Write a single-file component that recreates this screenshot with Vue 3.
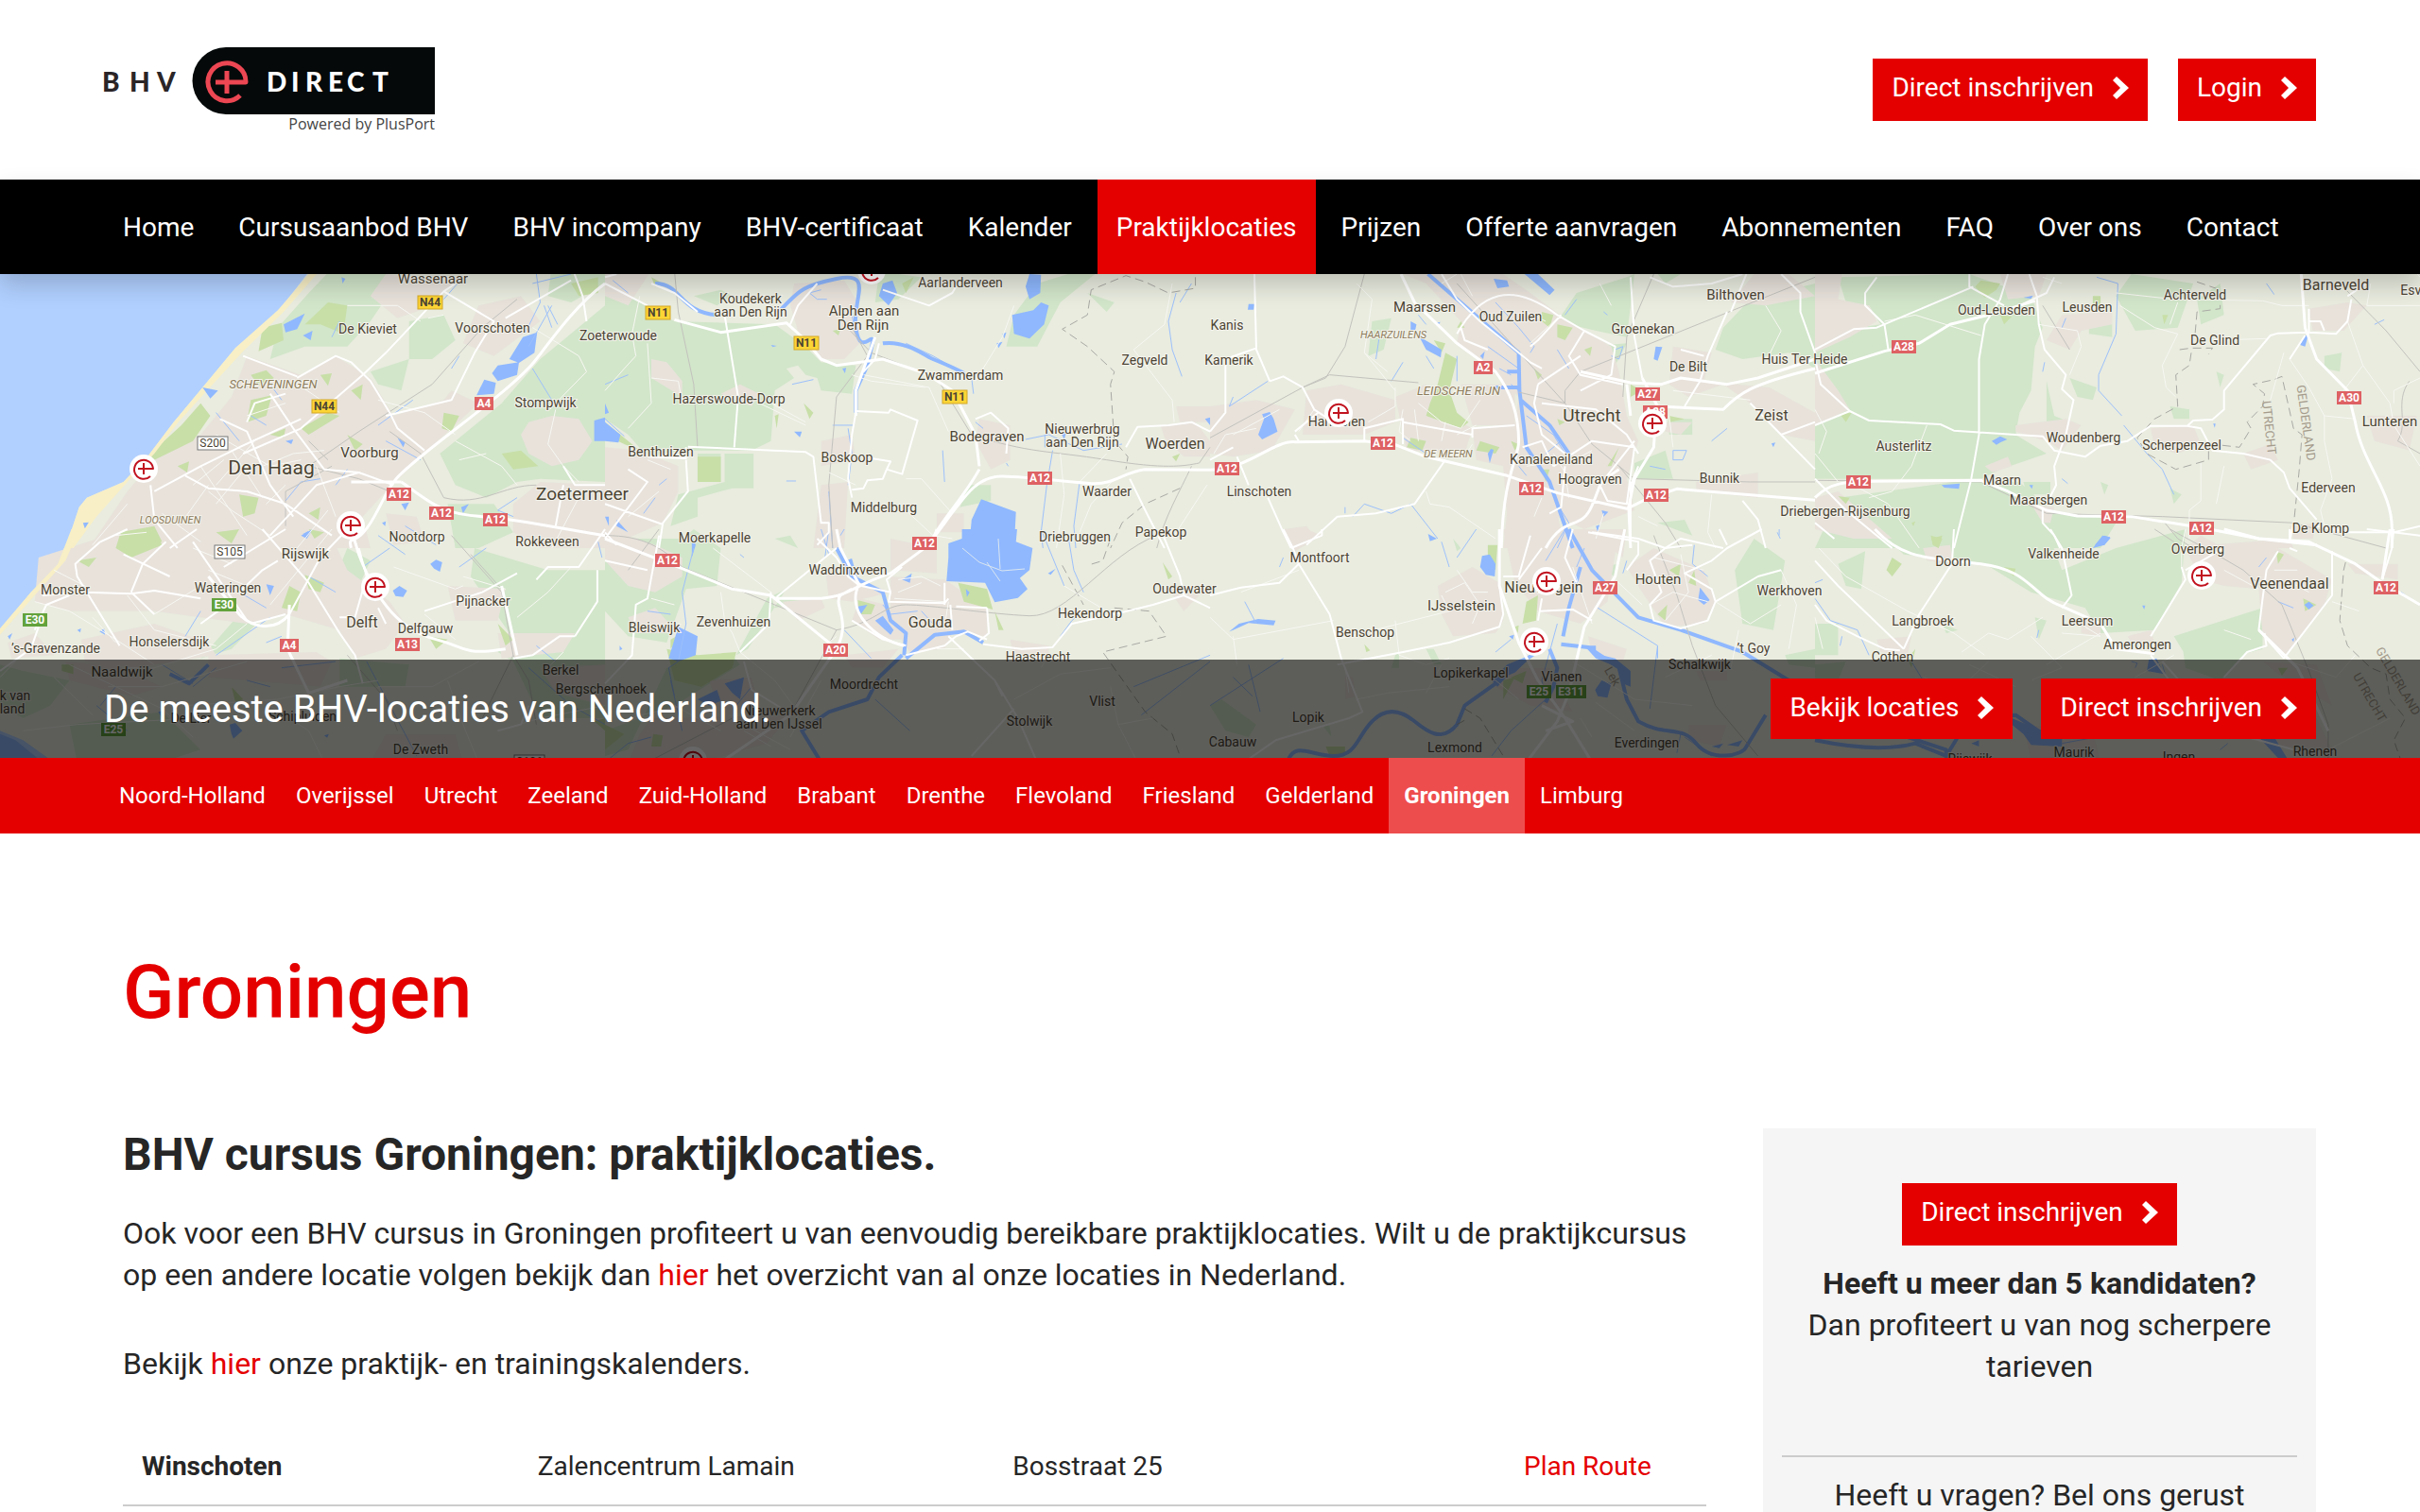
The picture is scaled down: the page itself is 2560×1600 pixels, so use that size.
<script setup>
const navItems = [
  'Home', 'Cursusaanbod BHV', 'BHV incompany', 'BHV-certificaat', 'Kalender', 'Praktijklocaties',
  'Prijzen', 'Offerte aanvragen', 'Abonnementen', 'FAQ', 'Over ons', 'Contact',
]
const activeNav = 'Praktijklocaties'

const provinces = [
  'Noord-Holland', 'Overijssel', 'Utrecht', 'Zeeland', 'Zuid-Holland', 'Brabant',
  'Drenthe', 'Flevoland', 'Friesland', 'Gelderland', 'Groningen', 'Limburg',
]
const activeProvince = 'Groningen'

const locations = [
  { city: 'Winschoten', venue: 'Zalencentrum Lamain', address: 'Bosstraat 25' },
]

const chevron = 'M4 0L0 4L8 12L0 20L4 24L17 12Z'

// Drawing order of the map layers, bottom to top.
const layers = ['sea', 'field', 'urban', 'park', 'sand', 'water', 'stream', 'river', 'rail', 'border', 'minor', 'road', 'major']

// The map is stored as eight sheets, each with its own origin.
const sheets = [
  {
    x: 0, y: -10,
    sea: 'M0 0H815L720 150 610 265 525 390 450 500 385 605 320 690 225 740 205 770 170 900H0Z',
    sand: 'M815 10L720 145 610 265 525 390 450 500 385 605 320 690 225 740 205 770 170 900H190L250 800 330 690 400 600 462 500 540 395 630 275 735 150 835 10Z',
    field: 'M870 0H1000L1010 90 960 180 900 260 790 260 700 300 720 200 800 90ZM1568 130L1400 300 1300 440 1180 560 1140 600 1180 700 1260 740 1340 690 1400 680 1568 690ZM1060 180L1150 160 1180 240 1120 300 1060 300ZM960 340L1060 300 1040 400 980 380ZM1160 760L1280 760 1330 850 1240 900H1180ZM1430 0H1568V60L1480 120 1420 100Z',
    urban: 'M640 290L780 350 870 290 960 360 1020 480 1150 430 1170 400 1240 440 1100 600 1000 720 940 800 960 900H230L330 720 400 620 520 540 600 420ZM1000 30L1180 60 1100 140 1030 170 960 100ZM1240 130L1350 100 1400 180 1280 290 1200 250ZM1350 540L1370 500 1430 480 1500 490 1535 560 1500 620 1430 640 1370 600ZM1330 760L1400 690 1568 700V900H1400L1330 850ZM1000 790L1080 800 1100 880 1020 890Z',
    park: 'M680 200L730 185 735 240 670 275ZM850 120L900 130 890 220 830 190 790 190ZM470 510L520 440 545 480 500 560 400 620 385 605ZM650 430L705 415 690 480 640 500ZM780 520L850 470 880 480 800 540ZM620 730L670 740 660 790 630 800ZM310 850L400 830 420 880 330 900ZM1480 60L1550 40V90L1500 100ZM650 350L690 335 710 360 670 385ZM1150 470L1190 480 1170 530 1145 520ZM1300 600L1350 590 1395 640 1330 650ZM910 400L940 380 935 430ZM830 350L860 345 850 385ZM700 540L740 520 735 550ZM900 540L940 570 920 590ZM800 790L830 770 825 810ZM460 640L490 625 485 660Z',
    water: 'M735 190L790 155 770 205 740 215ZM785 225L810 210 805 240ZM1355 230L1392 215 1385 280 1345 312 1320 300ZM1290 320L1345 310 1340 350 1290 370 1275 345ZM1255 365L1285 375 1280 410 1235 415ZM1540 495L1568 485V560L1540 560ZM1030 550L1050 565 1045 580ZM740 560L760 555 755 570ZM780 860L810 840 795 870ZM1040 760L1060 755 1050 780ZM1195 770L1215 760 1200 790ZM525 390L565 400 545 425ZM215 820L230 818 220 838ZM885 40L895 45 888 60ZM990 820L1000 815 998 830Z',
    stream: 'M560 470L620 560M1430 130L1370 260M1390 30L1400 120 1360 220M1380 330L1440 450M700 380L730 430M740 750L780 690 830 680M870 700L900 650M1050 830L1130 890M1480 30L1380 60M1070 430L980 510M1200 40L1150 110M1190 290L1170 330M1340 740L1290 780 1330 800M650 480L690 510M880 180L860 230M1410 130L1430 200M1420 130L1445 190M1000 560L1090 620',
    rail: 'M1340 110L1250 200 1120 380 930 530 800 640M800 640L930 680 1010 720M1010 530L1090 600 1150 740C1250 770 1300 700 1390 700M800 560L850 620M860 640L740 720V830',
    minor: 'M560 540L700 640 780 620M600 590L680 740M520 640L640 860M820 640L870 800M760 370L880 470M1110 170L1150 160M1380 200L1500 290 1520 340 1440 440 1425 460M420 790L520 880M700 860L600 780 540 720M900 130L1030 130 1090 180M980 430L1100 470 1180 540M240 890L330 760M1180 560L1300 640 1340 700M1260 600L1190 620M560 700L660 560M740 440L640 480M680 640L760 600 840 590M1440 460L1420 570 1460 640 1500 690M300 860L380 850M580 620L500 700M640 640L560 760M740 700L690 760M470 820L540 700M850 780L770 900M1500 740L1430 900',
    road: 'M1180 60L1150 85 1280 180 1230 280 1170 430 1000 480M1150 85L1000 280 940 350 780 520 630 600M770 360L870 290 910 310 960 370 1010 470 1030 520 1100 590M400 720L520 640 620 580 780 490M390 700L400 810 460 900M480 670L540 710 640 720 740 760 860 860M700 410L760 520 840 650 930 660 1020 700M630 290L770 355M570 490L640 530 700 700 760 800M930 660L820 700 700 860M640 500L660 440 740 410M1310 170L1480 50M1460 640L1490 700 1568 700M1440 830L1460 700M260 880L330 840M1480 0L1510 100 1520 180',
    major: 'M1568 60C1500 120 1440 220 1390 300S1200 500 1100 600 1020 690 970 800 900 850 910 900M1040 690C1120 760 1140 790 1250 800S1500 850 1568 860M910 690L1040 690',
  },
  {
    x: 640, y: -10,
    field: 'M0 60L180 180 440 190 520 260 560 310 650 320 640 410 560 400 550 360 520 350 500 320 470 330 490 360 440 400 430 560 380 590 200 590 110 610 60 540 0 490ZM240 600H300V690H240ZM310 600H385V710H330L240 740 240 800 170 830 190 730 310 690ZM1120 60L1200 30H1270L1180 120 1120 260 1040 260 1060 160ZM710 30H760L820 40 760 110 700 120ZM940 700L1000 700 1000 750 920 770ZM230 100L300 80 330 100 290 130ZM1250 90L1320 120 1300 150Z',
    urban: 'M490 60L620 50 650 110 660 250 620 300 560 300 500 210 480 130ZM120 300L160 310 200 370 200 420 120 360ZM970 490L1050 510 1050 620 1000 650 960 560ZM1440 510L1530 500 1568 560V610L1500 610 1450 550ZM0 580L90 590 190 640 190 720 150 820 0 900ZM560 560L640 540 650 620 560 640ZM560 700L630 690 620 900H540ZM860 790L930 790 930 850 860 850ZM300 410L350 380 400 410 380 450ZM1480 450L1568 450V500H1490ZM0 0H130L60 130 0 100Z',
    park: 'M590 210L610 205 605 225ZM440 480L450 475 445 520ZM0 500L40 540 90 590 50 570 0 540ZM1470 610L1490 600 1480 625ZM515 440L540 470 530 490ZM770 60L800 40 780 90ZM120 40L150 60 130 70ZM240 610H300V690H240Z',
    water: 'M720 60L745 50 757 90 735 130 710 100ZM1100 30L1130 32 1128 90 1100 110 1090 70ZM1055 160L1110 145 1130 120 1150 130 1138 190 1100 235 1060 220ZM1015 250L1030 245 1020 265ZM0 500L40 540 35 565 0 560ZM975 745L1065 785 1060 900H890L945 880 950 810ZM490 530L510 530 505 548ZM0 440L10 470 0 475ZM615 330L625 328 622 345ZM1180 530L1195 535 1190 555ZM30 810L60 850 30 830ZM1555 490L1568 485V510ZM0 800L10 800V830ZM1030 220L1040 215 1035 235ZM430 255L445 258 435 262Z',
    stream: 'M780 250L850 290 950 360 955 410M590 510H645M875 590L880 690M1160 590L1145 700 1130 850 1135 900M1230 690L1215 830 1220 900M1480 90L1460 180 1470 270 1495 355M1090 555L1150 540 1240 590 1340 570M1520 60L1490 120M0 380L60 350M630 520L640 600 630 700M580 720L590 900M485 380L540 365M470 687H495M140 700L160 680M1140 540V580M560 80L530 90 550 110 575 110M960 500L980 520M0 490L50 545M640 160L650 220M100 790L130 740M60 90L20 50M1040 630L1045 640',
    river: 'M130 60C200 60 190 150 290 160M450 150C500 90 500 70 600 45S640 110 650 200 690 220 695 240L680 320 650 400 650 470M720 250C780 240 830 290 850 300S910 330 930 345',
    rail: 'M180 20L190 150 230 380 240 580M620 190L690 280 860 360 950 540C1100 600 1150 590 1300 620S1500 640 1540 630L1568 580M640 200L680 290 600 420 580 700 590 900M1520 640C1490 720 1450 800 1430 900',
    border: 'M1530 40V75L1460 90 1400 55 1350 35 1260 80 1250 160 1185 205 1250 260 1320 340 1310 380 1320 560 1355 610 1350 650M1490 710L1400 760 1340 820 1310 900',
    minor: 'M110 250L120 440 60 520M120 360L190 370 200 440M400 440L520 510M1060 130L1030 230 960 370M670 350L840 390 890 530M1470 60L1450 190 1370 270 1470 430 1475 500M780 680L820 680 900 790M650 700L580 660M1560 700L1470 870M1180 600L1190 730 1170 900M1320 680L1260 760 1230 850M780 780L850 860 900 870M90 100L70 220 80 290 50 330 0 400M350 420L430 440 520 500M640 350L690 370 830 390M1300 600L1230 690M170 650L110 620M60 800L140 720',
    road: 'M0 60L110 130M310 160L345 420 335 580M650 465L735 470 740 460 810 495 770 665 730 650 720 680 680 685 670 710 640 715M215 578L520 595 540 610 560 820 580 820 580 850 550 890M650 470L640 540 630 680 640 740M0 40L30 30M210 620L215 720 150 820 140 900M0 870L110 690 60 650M480 190L500 130 550 60M720 80L840 130 900 90 920 50M690 615L740 625 730 650M1350 580L1380 515 1460 510 1520 500 1568 530M960 490L1000 470 1045 520 1040 600M1360 680L1400 780 1450 900M110 610L210 615 210 580M0 760L150 825M120 60L180 90 240 150M0 850L30 890M670 340L700 300 710 250',
    major: 'M180 175L300 215 470 185 520 240 560 300 600 320 720 300 830 345 900 400 960 540 970 640M970 650C930 740 860 830 850 870M850 870C930 740 960 670 1030 672S1200 690 1260 695 1350 655 1400 650L1568 652M700 230L650 400 650 480',
  },
  {
    x: 1280, y: -10,
    field: 'M1330 200L1400 110 1568 60V330L1500 280 1380 300 1310 270ZM900 180L950 90 1080 40 1100 30 1080 230 1000 210ZM1160 30H1220L1180 60ZM420 180L470 170 450 270 410 290ZM1100 630L1180 590 1200 680 1100 680ZM760 210L800 200 810 260ZM1160 820L1230 810 1250 860ZM1190 490H1250V540H1190ZM980 260L1080 250 1050 320 960 300Z',
    urban: 'M500 30H760L830 90 940 190 1040 260 1060 340 1080 480 1110 560 1080 680 1100 780 970 840 900 800H770L760 640 690 620 680 520 790 510 800 420 740 350 640 250 650 180 560 60ZM1200 260L1300 280 1280 370 1450 390 1568 470V560L1480 540 1400 440 1330 380 1240 420 1190 380ZM250 400L340 380 480 430 480 500 400 540 240 540ZM0 450L120 430 220 460 160 590 60 610 0 600ZM480 420L560 380 600 470 680 520 660 600 510 590ZM1260 690L1420 660 1420 740 1260 720ZM770 780L900 790 920 900H760ZM1350 120L1410 30 1500 30 1568 100 1440 130ZM650 380L790 380V510H680ZM190 840L250 830 270 860 220 890ZM1180 500L1250 500 1220 540 1180 530Z',
    park: 'M610 280L640 300 620 400 640 470 670 500 650 520 560 480 570 440 590 380ZM860 150L890 160 880 200 860 180ZM900 190L940 200 920 240 900 230ZM970 270L990 260 985 290ZM840 330L860 350 850 365ZM1090 380L1120 400 1090 420ZM700 560L750 580 740 600 690 590ZM580 240L610 250 600 280ZM1060 580L1040 640 1030 640ZM900 490L920 500 905 510ZM780 560L800 570 790 590ZM640 200L650 180 660 200ZM520 550L560 560 550 590 510 580ZM860 650L880 650 870 690ZM1190 480L1230 490 1190 500Z',
    water: 'M735 45L770 50 775 70 745 75ZM815 30H850L893 80 880 97ZM520 180L535 190 530 220 600 270 598 295 560 270 545 235 520 210ZM1155 260L1172 262 1160 305 1150 300ZM125 540L140 490 135 475 155 468 165 490 175 530 135 555ZM720 600L728 585 735 588 725 630ZM700 290L712 275 708 300ZM1000 830L1012 825 1005 850ZM1015 780L1032 785 1020 800ZM100 125L115 125 113 143 98 143ZM585 185L597 182 590 195ZM1455 568L1465 565 1460 580Z',
    stream: 'M60 420L50 450 150 370M500 310L470 370M560 290L580 330M640 290L640 370M740 120L800 200 840 260 830 280M720 260L800 330M780 350L750 330M900 270L930 330M800 640L820 670M1200 590L1235 590 1225 620 1200 620ZM440 220L430 300M910 560L870 600M1050 270L1070 260 1060 300 1040 290M500 550L560 600M370 800L400 760 470 790 520 760 590 870M1180 650L1140 640M350 790V770M900 760L930 820 900 900M1300 560L1340 520M950 110L920 160M780 380L800 400M540 160L560 190M1020 150L1030 160M1470 850L1478 870M1170 730L1190 740M820 480L890 540 920 600',
    river: 'M565 30L800 280 802 400 820 580 880 690 940 900M805 430L880 510 930 600M740 390H800M770 340H800',
    rail: 'M400 30L350 260 300 360 240 390 0 550M240 390L310 350 540 375M640 60L920 440 990 570 1100 680 1400 690H1568M920 440V400L960 340 1568 40M1150 30L1080 230 1070 420M1060 640L1180 820 1220 900M800 405L920 440',
    minor: 'M380 60L420 110 400 280 480 400M400 280L460 340M230 530L270 460M480 390V450L410 500M640 30L600 60M1440 130L1480 210 1440 310M820 150L870 180M1300 730L1290 850 1310 900M680 570L660 610M560 720L570 760 620 770 740 870M1400 430L1200 400M900 170L830 250M1190 480L1200 580M500 460L490 530 520 560M540 440L600 500 650 520M650 30L680 100M540 560L530 460M600 560L610 500M640 540L690 510M820 640L880 630M930 630L990 590M860 740L840 800M930 740L920 660 890 600M1020 790L1000 870M1160 830L1110 800M10 600L40 540 120 520M60 540L180 460M700 430L650 520M1040 130L1010 60',
    road: 'M115 30L120 270 155 370M120 265L40 300V470L0 530M155 370L190 355 240 390 270 460 320 500M640 220C700 90 780 50 900 160L970 210 1050 260 1040 350 960 400M910 160L850 240 830 260M970 210L930 290 960 350 1070 380M850 380L960 290M850 380L840 440 860 540 920 600M860 440L1000 460 1080 540 1110 600M1110 640L1090 700 1090 900M250 890L330 800 430 790 530 760 610 620M70 610L100 700M150 740L190 850 210 900M220 530L280 470M230 560L220 540M400 560V520L500 490 500 570M680 550L680 520 790 510M1100 230L1090 40M1100 230L1120 360M1340 150L1290 290 1270 370 1230 450M1390 30L1350 150M1140 40L1200 70 1300 60 1380 30M1480 30L1530 90V150L1568 280M1220 270L1280 290M700 180L830 310 860 330M600 30L640 110 700 180M1400 440L1480 540 1568 500M1480 540L1568 650M810 580L860 560 890 640M1100 560L1010 700 1030 750 1080 760 1100 580 990 560 890 640M880 790L910 770 920 640M990 850L1110 870 1180 900 1220 870 1330 900M1380 750L1420 810 1440 900M650 200L660 240 720 270M0 620L60 580M500 500L680 540',
    major: 'M0 652C100 650 160 560 220 563L400 560 480 572 560 610 770 670 900 725 1080 775 1130 745 1210 712 1568 748M495 30L530 120 640 250 740 340C790 420 800 500 800 560S760 660 755 900M870 900C920 790 960 850 990 765S1000 700 1060 650M1090 900L1085 770 1100 680 1150 580 1155 480M960 340L1090 375 1170 380 1220 360 1340 380 1420 360 1568 300M1080 380L1090 480M1120 360L1160 450 1330 460C1370 410 1400 380 1568 330',
  },
  {
    x: 1920, y: -10,
    field: 'M60 40L400 30 560 100 590 200 570 260 560 400 530 470 520 540 600 600 480 650 430 680H0V270L110 200 170 190 140 130 80 120ZM360 690H530L620 790 790 800 740 900H0L60 740ZM780 100L820 30 980 60 940 200 830 210ZM1320 290L1365 280 1360 340 1320 330ZM600 370L620 480 660 500 600 500ZM660 360L730 390 720 430 680 420ZM710 180L770 190 770 230 710 220ZM540 690H610V730H550ZM920 450L970 460 970 490 930 490ZM1050 60L1060 160 1000 190 990 110ZM1040 340L1060 350 1050 390ZM920 710L950 730 930 760ZM740 690L760 700 750 730Z',
    urban: 'M0 30H70L60 110 140 130 160 180 90 230 0 280ZM480 30L600 30 580 100 500 110ZM640 160L770 150 770 190 690 210 660 270 600 240ZM1280 140L1380 120 1430 130 1370 210 1290 210ZM520 510L650 490 690 510 640 590 600 560 520 530ZM870 520L980 510 1000 570 940 600 880 580ZM0 300L60 400 90 460 0 510ZM0 740L60 720 200 870 100 870 0 840ZM1430 480L1560 480 1540 590 1450 560ZM1110 600L1180 570 1200 620 1130 650ZM440 640L500 610 510 640 460 660ZM1230 830L1300 820 1290 870 1240 870ZM1020 890L1230 870 1240 900H1020ZM560 760L620 770 610 820 590 820Z',
    park: 'M430 50L480 60 470 80 440 105 415 70ZM480 160L510 165 490 190ZM60 735L90 740 80 760ZM65 475L95 470 80 500ZM300 870L330 860 320 900ZM250 820L260 815 255 830ZM720 100H740V130H720ZM900 160L915 160 905 190Z',
    water: 'M1270 225L1278 225 1270 260 1257 255ZM458 560L480 545 498 555 480 565 470 572ZM328 700L375 695 373 712 335 708ZM725 890L740 870 750 860 766 868 750 890ZM1032 505L1038 505 1036 518ZM555 700L565 700 562 712ZM540 105L565 98 560 108Z',
    stream: 'M730 40L785 60 780 220 735 350 735 400 795 480M800 510L860 600 900 650 930 730M640 200L650 170M640 680L655 695M1450 190L1475 175M1170 60L1190 95M595 310L590 340',
    rail: 'M0 685L430 690 600 790 900 800 1240 820 1480 900M590 130L660 270M900 810L940 870 980 900M1360 60L1480 210 1568 340M1540 370C1500 440 1540 500 1510 560L1568 600',
    border: 'M990 55L1050 80 1050 140 990 150 985 220M945 270L975 265 1030 265 1020 285M975 280L970 320 935 350 940 450 880 490 835 550 860 600 935 650 1020 620 1020 580 1050 573 1100 580 1130 520 1120 500 1160 450 1165 410 1135 380 1190 365 1210 355 1240 520 1262 540 1255 650 1240 830',
    minor: 'M180 180L260 160 430 225M580 190L680 210 690 260 660 350M780 90L930 110 1160 115 1210 130 1280 130M790 130L880 200 940 220 900 320 910 390 935 420M1040 240L1170 235M1230 300L1280 390 1320 480 1320 560 1340 680 1310 780 1320 830M1380 180L1420 320 1370 400M1420 320L1490 440 1500 510 1568 640M940 120L920 190M290 510L250 640 200 720 140 740M0 600L60 690M1440 60L1430 130 1568 130M970 870L970 780 1000 750 1000 630M1060 640L1040 760M1500 440V400L1568 360M0 460L30 530 10 600M1540 0L1568 40M1320 480L1400 490M1215 280L1180 430M590 40L640 60M100 700L190 760 270 900',
    road: 'M160 40L130 90V130L180 190 190 270M0 270L100 205 160 200 410 70M400 30L400 70 490 130M500 30L480 110 440 190 425 300V540L405 680 360 900M555 30L575 100 580 190 595 270 650 350 640 395 670 430 650 540 620 640 625 700 600 760M90 465L0 510M520 540L590 545 620 590 700 610 740 575 810 560 870 512 965 512 1000 520 1030 590 1110 600 1180 620 1215 660 1230 710 1300 810M965 512L980 495 1030 492 1060 460 1060 400 1180 225 1200 218 1280 215 1350 220 1380 180 1390 110M1280 180L1310 180 1320 210M1280 140V220M1230 300L1270 225M620 40L600 90 530 130M590 770V820L620 860 635 900M1240 820L1230 880M0 820L50 870M0 300L15 380 90 465 140 495 325 507 360 527 520 540M1430 60L1380 100M1500 850L1380 850 1300 830M1500 850L1568 830M0 680L80 780 200 900',
    major: 'M0 345L180 275 270 250 350 190 450 160 570 115M1260 30L1270 200 1300 300 1380 400 1400 500C1420 640 1500 720 1495 850V900M0 740C40 690 80 690 150 688L430 685 500 720 600 780 680 798 820 800 1000 835 1150 870 1300 890',
  },
  {
    x: 0, y: 270,
    sea: 'M0 0H185L150 110 80 200 0 320ZM0 640L60 670 140 740H0Z',
    sand: 'M185 0L150 110 80 200 0 315V335L90 210 170 100 205 0Z',
    field: 'M1230 60L1420 130 1568 130V600H1400L1330 420 1290 390 1320 330 1220 150ZM0 430L60 450 180 480 130 560 60 600 0 560ZM620 270L690 270 600 380 520 410ZM880 410L1060 430 1050 500 880 500ZM900 60L960 100 930 180 880 120ZM180 620L420 580 520 700 420 740H200Z',
    urban: 'M100 90L330 0H850L900 130 1010 230 1050 300 1000 380 920 410 880 320 740 270 640 300 400 260 180 260 90 230ZM210 350L400 300 540 360 560 400 350 440 220 420ZM20 360L90 330 140 400 30 410ZM1160 180L1310 190 1290 290 1180 290ZM170 420L300 430 420 500 340 530 180 480ZM1290 330L1490 330 1460 390 1300 410ZM1400 440L1568 430V560L1440 520ZM540 400L820 390 860 420 830 500 540 470ZM1000 650L1180 650 1200 740H960Z',
    park: 'M310 20L400 0 420 50 340 90 300 60ZM560 10L620 0 600 45ZM790 145L840 170 830 200 800 190ZM750 180L780 200 770 260 730 250ZM800 0L840 10 815 30ZM160 430H190V460L160 450ZM200 100L250 90 230 120ZM1290 300L1330 350 1310 370ZM1110 340L1160 350 1130 380ZM1540 610L1568 600V640ZM600 500L630 540 610 550Z',
    water: 'M1115 110L1130 97 1146 105 1140 135 1125 125ZM1018 195L1035 180 1055 195 1045 215 1025 212ZM595 620L610 615 628 640 605 665 600 650ZM200 320L210 315 208 328ZM258 325L270 315 272 335ZM785 15L800 5 795 25ZM690 175L710 180 700 210ZM20 340L32 330 25 350ZM840 655L852 650 848 662ZM410 580L425 575 420 600ZM0 650L40 670 110 740H0ZM960 150L975 140 965 160Z',
    stream: 'M700 280L560 400M620 200L690 250M800 150L870 200M1190 120L1260 60M500 500L560 440M640 480L700 500M980 20L1050 80M250 560L330 640M730 440L870 420M300 500L260 560M1370 440L1480 560 1568 620M420 430L500 490M520 260L480 340M690 360L730 340M1550 40L1560 90M940 120L1010 60M1390 370L1440 420M950 420L1080 720',
    river: 'M440 460L490 490 540 430',
    rail: 'M1170 20L1300 200 1330 400 1370 480 1390 620M1330 400L1250 600M900 400L1000 540 1030 640M1220 80L1300 190',
    minor: 'M180 430L300 500 420 570 500 660M90 230L180 260 300 350 400 430M640 300L560 380 400 440 330 440M480 560L720 540 880 500 980 480M140 470L240 590M1160 480L1200 620 1240 740M1290 640L1400 600 1568 560M60 640L200 620 360 610 520 600M700 560L800 640 840 740M1100 270L1180 350M1200 150L1310 190M1020 120L1180 190 1200 180M540 130L640 180M520 180L400 270M40 420L0 470M330 210L400 320 560 370M500 60L600 110M1460 390L1420 440M240 280L300 360M140 130L220 180M280 500L420 500 640 420M980 500L1120 500 1240 420M860 0L700 240M1480 120L1420 200 1340 280',
    road: 'M260 40L195 110 200 150 240 230 310 370M110 210L220 200 340 205 400 195 520 220M90 320L120 240 180 210M440 60L510 0M430 40L370 110 340 200M680 0L800 170 880 330 920 400 940 490M750 270L830 90 900 0M740 0L580 120M340 200L400 270M650 300L740 270M520 300L610 220M100 310L80 380 0 450M1568 0L1500 120H1420L1390 160M1100 260L1250 200 1340 140M1490 340L1450 340 1380 400 1330 410M1548 130V230L1490 340M880 280H920L950 150 930 60M1000 300L980 250M500 40L640 290M320 80L440 150M720 100L680 130 620 200M1290 640L1350 620 1370 560',
    major: 'M910 0L930 80C980 240 1040 320 1130 350S1200 400 1310 380M750 240L745 380 800 520 900 480M750 270C710 330 650 310 620 270L540 150M1300 180L1340 400',
  },
  {
    x: 640, y: 270,
    field: 'M0 30H200L230 0 300 60 290 180 210 190 160 360 60 340 0 260ZM370 380L470 190 420 220 340 400ZM430 210L520 230 440 250ZM160 440L330 400 350 430 180 560 0 640V720L60 700ZM440 30L480 20 500 60Z',
    urban: 'M0 0L130 50 200 90 200 150 130 200 60 180 0 100ZM460 230L560 220 570 250 500 290ZM740 150L880 160 990 250 990 340 900 330 880 380 790 390 740 300ZM570 120L660 160 740 200 640 230 580 220ZM660 220L730 240 770 350 710 350 640 290ZM60 280L130 250 190 330 80 330ZM120 600L480 590 420 680 250 740H60L90 650ZM620 400L760 380 720 440 640 440ZM1050 350L1150 370 1150 420 1060 420ZM740 30L860 60 860 140 740 130ZM1460 190L1540 210 1500 260ZM270 480L380 470 400 560 300 600Z',
    park: 'M915 170L990 190 1005 255 930 230ZM1010 260L1033 320 1020 320ZM160 380L240 400 340 390 330 440 250 500 180 480ZM1445 105L1470 150 1460 160ZM655 225L700 240 690 270 660 270ZM0 620L50 650 0 700ZM125 650L150 655 145 690 120 690ZM170 380L200 330 170 350Z',
    water: 'M925 0H1068L1065 40 1108 60 1100 130 1075 155 1095 190 1070 218 1010 232 985 170 885 165 890 90 890 45 925 30ZM190 310L240 340 235 400 190 420 165 410ZM240 540L290 510 300 545 270 560ZM655 245L680 240 660 275ZM700 290L720 275 748 320 740 335ZM770 160L795 140 790 170ZM1148 140L1168 125 1155 145ZM935 190L945 200 938 215ZM225 20L235 50 225 90ZM310 490L360 470 350 540 330 520ZM38 370L45 380 38 385Z',
    stream: 'M230 60L200 200 210 300 190 420 165 440 180 530M620 320L690 410M560 0L580 80M1130 0L1190 180M1200 20L1215 130 1240 200M700 540L790 640M1370 500L1568 400M1390 590L1568 420M170 480L200 640M110 260L170 270M580 0L570 90M360 90L350 80M720 240L740 270 810 260M820 260L850 300M610 20L620 0M0 740L60 680 120 660M340 560L380 500M1180 340L1210 290 1220 280',
    river: 'M600 60L640 150 720 200 740 290 780 330 775 400M780 410L855 335 930 325 980 360M770 400L710 470 680 540 580 580 510 640 560 740M635 95L650 160',
    rail: 'M0 20C100 20 150 60 200 120L440 240 600 320C700 300 720 240 780 240S1000 270 1100 275 1300 80 1430 20M600 320L480 590M110 740L330 600M60 130L140 0',
    border: 'M1310 30L1290 100 1250 115M1185 115L1240 240M1320 250L1410 260 1455 340 1290 390 1400 580 1470 650 1490 720',
    minor: 'M280 60L430 200M120 220L180 240M350 390L330 330 310 290 300 200M350 390L440 480 500 580M1060 540L1180 460 1310 440M330 600L480 700M1310 500L1330 620 1380 740M1130 440L1140 420M560 480L480 660M860 380L930 380M1190 180L1300 260M600 340L580 360M180 560L300 640M820 170L760 200M750 220L880 230M1330 620L1420 600M360 640L430 690M890 230L880 310M60 600L200 560M760 160L820 150 870 180',
    road: 'M140 20L110 220 80 240 70 400 0 490M445 215L600 60M350 390L425 300 430 200M665 180L740 200 735 230 880 235 890 220M990 250L910 245M740 200L730 160 770 120M890 340L1010 480 1070 600 1120 740M780 400L880 370 910 340 940 325 990 350M990 250L995 330 970 355M980 365L1080 380 1160 375 1210 300 1320 270 1420 240 1500 210M1440 0L1490 150 1500 210 1568 250M640 290L720 350 780 370M1060 570L950 720M0 100L110 130M550 30L600 90 630 150 660 180M880 240L880 170M1010 480L1030 530M360 420L380 510 460 570M900 320L895 240',
    major: 'M0 30L200 125 330 190 430 210 600 380M440 220H560C640 210 640 180 740 140L850 40 860 0M600 380C640 290 590 240 610 210L640 190M660 170C620 260 700 350 775 370M600 380L480 590 300 740M600 0L610 60 660 180',
  },
  {
    x: 1280, y: 270,
    field: 'M1410 30L1490 100 1460 320 1380 300 1360 130ZM0 560L30 540 120 620 100 660 40 640ZM480 400L490 390 490 440 470 440ZM560 380L580 380 600 430 580 430ZM1490 400L1568 380V440L1500 430ZM290 620L310 625 315 660ZM1000 120L1060 110 1050 150ZM630 30L650 60 640 70Z',
    urban: 'M590 180L680 120 750 170 760 290 740 330 630 340 600 270ZM760 0H1060L1030 230 960 300 850 260 790 170ZM1080 120L1150 60 1280 130 1310 230 1280 300 1180 310 1120 200ZM970 0H1080L1070 90ZM190 20L250 0 290 20 220 70ZM780 440L880 440 940 580 830 560 740 500ZM980 340L1080 380 1070 420 990 400ZM350 460L370 470 380 530 350 540ZM1260 450H1340V480H1270ZM1240 620L1340 620 1320 690 1240 670Z',
    park: 'M720 50L745 50 740 130 720 120ZM820 230L850 210 845 290 810 300ZM780 470L820 450 810 490ZM1160 270L1185 240 1180 290ZM400 365L415 385 405 390ZM1240 170L1255 130 1260 180ZM300 690H350L350 720H310ZM760 480L790 470 760 540ZM1190 130L1220 110 1215 150ZM790 310L800 305 798 330Z',
    water: 'M705 85L725 80 740 110 738 150 715 145 700 120ZM1270 185L1295 225 1280 240 1265 225ZM998 510L1015 480 1040 490 1030 535 1005 530ZM770 430L830 400 820 420 790 455 770 465 760 480 745 500 730 480ZM50 325L75 300 125 285 170 290 165 305 100 298 60 320ZM565 15L588 30 570 38ZM1300 690L1330 680 1320 695ZM1340 685L1380 670 1370 690ZM970 370L1000 370 1000 395 1050 410 1090 450 1090 500 1070 490 1060 440 1000 410ZM775 340L788 335 785 350Z',
    stream: 'M90 230L120 300M1005 250L1160 370V410M0 560L190 410M100 430L130 580M60 470L110 530M780 350L740 390M1160 370L1140 570M900 300L860 480 870 540 780 640 730 720M690 0L640 90M600 40L620 120M970 60L950 120M1255 50L1250 110 1290 150M190 90L180 120M1230 660L1300 720M1475 0V20M1080 100L1070 140M870 100L920 0M1220 650L1210 710',
    river: 'M930 0L990 130 1110 280 1220 320 1380 390 1500 480M960 120L930 250 915 340M910 365L980 375 1060 440 1080 540 1110 610C1180 660 1220 620 1260 680S1380 720 1390 690L1440 590M840 395L790 440 740 490 660 560 640 620C600 680 560 640 530 610S460 560 420 610 380 720 320 720 220 670 200 740M880 380L900 440 890 500 870 550',
    rail: 'M1150 20L1210 210 1250 370 1310 560 1420 720',
    border: 'M660 570L700 600 760 720M640 620L670 600',
    minor: 'M0 280L60 350 320 290M330 350L620 260 600 210M480 290L490 400 560 430 620 410M380 540L460 520 620 500M1310 230L1400 300 1480 240M1370 320L1350 440M940 420L1100 540 1250 560M60 340L70 430M1050 160L1120 240M230 130L80 200M600 430L560 520M350 440L360 520M1180 470L1300 400M640 130L680 200 720 200M610 200L660 170 700 240 680 300M1150 90L1280 130M1140 240L1200 200 1290 230M1220 80L1240 200 1180 290M940 120L990 300M960 600L990 660M1480 130L1520 240 1500 380M730 470L800 540M1000 550L1100 640',
    road: 'M190 0L215 60 230 110 310 270 340 410 395 580 360 600 170 670 100 730M230 110L180 170 80 185 0 210M330 430L500 390 620 360 750 310 760 270 750 180M855 260L940 255 990 290M980 10L1110 40 1110 80 1080 130M1250 50L1180 60 1140 100 1170 200 1140 240 1150 290 1220 315 1290 290 1310 230 1300 190 1230 140 1300 100 1340 60 1430 0M210 60L290 20V0M760 150L800 150 830 20M860 220L850 290M950 170L920 90 940 0M1480 130L1420 150 1310 230M1340 50L1320 0M800 160L860 60',
    major: 'M750 0L750 180 800 360 850 480 920 600 990 740M1075 0L1050 150 970 310 930 520 900 610 820 740M860 560L940 610 870 640',
  },
  {
    x: 1920, y: 270,
    field: 'M160 0L600 0 640 130 780 60 960 0 950 170 880 320 740 330 700 250 560 200 440 110 230 80ZM930 340L1160 250 1160 380 1100 400 960 400ZM0 300L60 300 60 400 0 400ZM60 110L130 70 120 190 80 180ZM570 280L600 290 580 350ZM330 300L370 320 340 330ZM0 430L80 420 60 480 0 480ZM950 350L1120 390 1050 480 960 440Z',
    urban: 'M960 60L1000 20 1060 60 1200 60 1340 160 1320 240 1220 400 1160 340 1150 190 1060 180 1000 160ZM1380 110L1510 110 1510 160 1400 140ZM690 280L740 300 740 340 690 330ZM810 340L870 320 880 360 820 360ZM160 350L250 340 240 400 170 390ZM1160 420L1300 430 1340 560 1200 460ZM280 60L350 50 360 110 290 100ZM540 620L720 640 740 740H560ZM1130 600L1300 600 1340 700 1200 690Z',
    park: 'M300 20L330 30 320 60 305 50ZM200 90L225 110 200 150 185 130ZM490 120L520 125 515 150ZM1195 70L1215 80 1200 110ZM1265 220L1300 240 1270 260ZM240 410L260 380 250 440ZM1200 440L1225 440 1210 465Z',
    water: 'M720 60L745 20 765 25 750 50ZM1268 240L1280 230 1292 242 1280 255ZM865 415L885 410 905 460 860 450ZM510 600L550 620 590 640 640 660 640 690 560 685 540 650 510 620ZM848 242L856 242 853 255ZM405 680L425 670 425 690ZM1150 660L1190 660 1230 740H1210ZM1235 350L1242 345 1240 358Z',
    stream: 'M0 220L40 290 110 320 140 400M250 420L290 500M70 340L65 370M580 320L575 345M1520 200L1540 220M820 420L835 425 830 440M1170 90L1150 120M380 620L460 590M1050 700L1070 680M640 680L730 660M900 430L910 470M20 160L0 170M1200 230L1240 250',
    river: 'M0 670C120 700 200 700 260 680L340 720 400 600 520 590 590 650M1180 660L1220 740M240 660L340 700 340 740',
    rail: 'M920 0L1040 80 1110 130 1210 240 1280 450 1330 620V740M880 0L930 40',
    border: 'M1375 105L1370 130 1360 290 1380 370 1440 440 1480 460 1490 540 1530 600 1500 670 1520 740',
    minor: 'M10 60L80 150 240 260 360 330 440 400M380 390L450 330 500 350 590 280M640 330L740 340 700 310M400 430L520 500M1060 130L1150 190M950 120V60L960 0M0 280L20 380M450 420L380 500 280 470M1130 350L1060 320M740 330L600 430M930 400L830 470M1340 230L1410 260M1400 400L1350 470 1230 420M1330 700L1490 600M1100 480L960 560M1250 130L1190 130M1220 160L1280 200M560 340L640 440 560 480',
    road: 'M360 0L355 110 270 270 230 380M0 100L60 180 230 380M610 0L640 60 665 210 640 250M870 340L960 160 950 120M1200 70L1170 130 1160 220 1150 320 1215 410M1215 410L1340 210 1340 70M1230 0V40M870 400L930 500 980 580M220 385L180 380 110 340 30 290 0 240M1060 470L1120 390 1170 370 1165 330M1250 70L1230 60M1500 0L1495 60 1470 160M1430 0L1568 20M1060 60L960 130M900 420L1060 640 1240 700',
    major: 'M155 0C230 100 300 90 430 110S560 210 640 245L740 300 780 380 880 395M1060 0L1150 30 1280 40 1400 110 1470 170 1568 240M1150 320L1250 440 1330 640M1490 0L1470 160',
  },
]

// name, centre x, baseline y, text size (14 when left out)
const labels = [
  ['Wassenaar', 458, 10, 15], ['De Kieviet', 389, 63], ['Voorschoten', 521, 62], ['Voorburg', 391, 194, 15],
  ['Den Haag', 287, 212, 21], ['Nootdorp', 441, 283], ['Rokkeveen', 579, 288], ['Stompwijk', 577, 141],
  ['Zoetermeer', 616, 239, 19], ['Zoeterwoude', 654, 70], ['Aarlanderveen', 1016, 14], ['Koudekerk', 794, 31],
  ['aan Den Rijn', 794, 45], ['Alphen aan', 914, 44, 15], ['Den Rijn', 913, 59, 15], ['Zegveld', 1211, 96],
  ['Zwammerdam', 1016, 112], ['Hazerswoude-Dorp', 771, 137], ['Nieuwerbrug', 1145, 169], ['aan Den Rijn', 1145, 183],
  ['Bodegraven', 1044, 177, 15], ['Woerden', 1243, 185, 16], ['Benthuizen', 699, 193], ['Boskoop', 896, 199],
  ['Waarder', 1171, 235], ['Middelburg', 935, 252], ['Driebruggen', 1137, 283], ['Papekop', 1228, 278],
  ['Moerkapelle', 756, 284], ['Kanis', 1298, 59], ['Kamerik', 1300, 96], ['Maarssen', 1507, 40, 15],
  ['Oud Zuilen', 1598, 50], ['Groenekan', 1738, 63], ['Bilthoven', 1836, 27, 15], ['De Bilt', 1786, 103],
  ['Huis Ter Heide', 1909, 95], ['Utrecht', 1684, 156, 19], ['Zeist', 1874, 155, 16], ['Harmelen', 1414, 161],
  ['Kanaleneiland', 1641, 201], ['Hoograven', 1682, 222], ['Bunnik', 1819, 221], ['Linschoten', 1332, 235],
  ['Driebergen-Rijsenburg', 1952, 256], ['Barneveld', 2471, 17, 16], ['Esvelt', 2558, 22], ['Achterveld', 2322, 27],
  ['Oud-Leusden', 2112, 43], ['Leusden', 2208, 40], ['De Glind', 2343, 75], ['Lunteren', 2528, 161, 15],
  ['Woudenberg', 2204, 178], ['Scherpenzeel', 2308, 186], ['Austerlitz', 2014, 187], ['Maarn', 2118, 223],
  ['Maarsbergen', 2167, 244], ['Ederveen', 2463, 231], ['De Klomp', 2455, 274], ['Rijswijk', 323, 301, 15],
  ['Wateringen', 241, 337], ['Monster', 69, 339], ['Honselersdijk', 179, 394], ['’s-Gravenzande', 59, 401],
  ['Delft', 383, 374, 16], ['Delfgauw', 450, 380], ['Pijnacker', 511, 351], ['Naaldwijk', 129, 426, 15],
  ['Berkel', 593, 424], ['Bergschenhoek', 636, 444], ['k van', 16, 451], ['land', 13, 465],
  ['De Lier', 202, 475], ['Schipluiden', 320, 473], ['De Zweth', 445, 508], ['Waddinxveen', 897, 318],
  ['Bleiswijk', 692, 379], ['Zevenhuizen', 776, 373], ['Gouda', 984, 374, 16], ['Hekendorp', 1153, 364],
  ['Oudewater', 1253, 338], ['Haastrecht', 1098, 410], ['Moordrecht', 914, 439], ['Nieuwerkerk', 824, 467],
  ['aan Den IJssel', 824, 481], ['Vlist', 1166, 457], ['Stolwijk', 1089, 478], ['Cabauw', 1304, 500],
  ['Montfoort', 1396, 305], ['Nieuwegein', 1633, 337, 16], ['Houten', 1754, 328, 15], ['Werkhoven', 1893, 340],
  ['IJsselstein', 1546, 356, 15], ['Benschop', 1444, 384], ['’t Goy', 1855, 401], ['Schalkwijk', 1798, 418],
  ['Lopikerkapel', 1556, 427], ['Vianen', 1652, 431], ['Lopik', 1384, 474], ['Lexmond', 1539, 506],
  ['Everdingen', 1742, 501], ['Doorn', 2066, 309], ['Valkenheide', 2183, 301], ['Overberg', 2325, 296],
  ['Veenendaal', 2422, 333, 16], ['Langbroek', 2034, 372], ['Leersum', 2208, 372], ['Amerongen', 2261, 397],
  ['Cothen', 2002, 410], ['Rijswijk', 2084, 518], ['Maurik', 2194, 511], ['Ingen', 2305, 516], ['Rhenen', 2449, 510],
]

const districts = [
  ['SCHEVENINGEN', 289, 121, 13], ['LOOSDUINEN', 180, 264, 11], ['HAARZUILENS', 1474, 68, 11],
  ['LEIDSCHE RIJN', 1543, 128, 13], ['DE MEERN', 1532, 194, 11],
]

const regions = [
  ['UTRECHT', 2396, 163, 84], ['GELDERLAND', 2435, 158, 82],
  ['GELDERLAND', 2533, 433, 60], ['UTRECHT', 2503, 450, 60], ['Lek', 1702, 428, 60],
]

const badges = [
  ['N44', 455, 30], ['N44', 343, 140], ['A4', 512, 137], ['A12', 422, 233], ['A12', 467, 253], ['A12', 524, 260],
  ['S200', 225, 179], ['N11', 696, 41], ['N11', 853, 73], ['N11', 1010, 130], ['A12', 1100, 216], ['A12', 978, 285],
  ['A2', 1569, 99], ['A27', 1743, 127], ['A28', 1751, 146], ['A12', 1463, 179], ['A12', 1298, 206], ['A12', 1620, 227],
  ['A12', 1752, 234], ['A28', 2014, 77], ['A30', 2485, 131], ['A12', 1966, 220], ['A12', 2236, 257], ['A12', 2329, 269],
  ['S105', 243, 294], ['E30', 237, 350], ['E30', 37, 366], ['A4', 306, 393], ['A13', 431, 392], ['E25', 120, 482],
  ['A12', 706, 303], ['A20', 884, 398], ['A27', 1698, 332], ['E25', 1628, 442], ['E311', 1662, 442], ['A12', 2524, 332],
  ['S106', 560, 516],
]
const badgeWidth = (name) => name.length * 6 + 8

const pins = [
  [152, 206], [371, 266], [397, 331], [922, -4], [1416, 147], [1748, 158], [1636, 325], [1623, 389], [2329, 319], [733, 515],
]
</script>

<template>
  <div class="page">
    <header class="top wrap">
      <a href="#" class="logo" aria-label="BHV Direct, Powered by PlusPort">
        <svg viewBox="0 0 350 90" width="350" height="90">
          <path d="M350 0H129A35.5 35.5 0 0 0 129 71H350Z" fill="#050909" />
          <text class="logo-word dark" x="-2 27 56" y="47">BHV</text>
          <path d="M118 37H150A20 20 0 1 0 144 51M130 25V49" fill="none" stroke="#ec4753" stroke-width="5" stroke-linejoin="round" />
          <text class="logo-word light" x="172 198 213 237 257 284" y="47">DIRECT</text>
          <text class="logo-tag" x="350" y="87">Powered by PlusPort</text>
        </svg>
      </a>
      <div class="actions">
        <a href="#" class="btn">Direct inschrijven<svg width="17" height="24" viewBox="0 0 17 24"><path :d="chevron" /></svg></a>
        <a href="#" class="btn">Login<svg width="17" height="24" viewBox="0 0 17 24"><path :d="chevron" /></svg></a>
      </div>
    </header>

    <nav class="main-nav" aria-label="Hoofdmenu">
      <ul class="wrap">
        <li v-for="item in navItems" :key="item">
          <a href="#" :class="{ active: item === activeNav }">{{ item }}</a>
        </li>
      </ul>
    </nav>

    <section class="hero">
      <svg class="map" viewBox="0 0 2560 512" preserveAspectRatio="xMidYMid slice" aria-hidden="true">
        <g v-for="layer in layers" :key="layer" :class="layer">
          <path
            v-for="sheet in sheets"
            :key="sheet.x + '-' + sheet.y"
            :d="sheet[layer] || ''"
            :transform="`translate(${sheet.x} ${sheet.y}) scale(.4082 .3333)`"
            vector-effect="non-scaling-stroke"
          />
        </g>
        <path class="dyke" d="M394 -10M1044 305L1058 325M1018 290L1036 305 1060 314 1084 312M1056 280L1058 312" />
        <text v-for="([name, x, y, size = 14], i) in labels" :key="'l' + i" class="label" :x="x" :y="y" :font-size="size">{{ name }}</text>
        <text v-for="[name, x, y, size] in districts" :key="name" class="district" :x="x" :y="y" :font-size="size">{{ name }}</text>
        <text v-for="([name, x, y, turn], i) in regions" :key="'r' + i" class="region" :x="x" :y="y" :transform="`rotate(${turn} ${x} ${y})`">{{ name }}</text>
        <g v-for="([name, x, y], i) in badges" :key="'b' + i" :class="['badge', 'badge-' + name[0]]">
          <rect :x="x - badgeWidth(name) / 2" :y="y - 7" :width="badgeWidth(name)" height="14" />
          <text :x="x" :y="y + 4">{{ name }}</text>
        </g>
        <g v-for="([x, y], i) in pins" :key="'p' + i" :transform="`translate(${x} ${y})`" class="pin">
          <circle r="15" />
          <path d="M-6 0H10A10 10 0 1 0 7 8M0 -6V6" />
        </g>
      </svg>
      <div class="hero-bar">
        <div class="wrap">
          <p class="hero-title">De meeste BHV-locaties van Nederland.</p>
          <div class="actions">
            <a href="#" class="btn">Bekijk locaties<svg width="17" height="24" viewBox="0 0 17 24"><path :d="chevron" /></svg></a>
            <a href="#" class="btn">Direct inschrijven<svg width="17" height="24" viewBox="0 0 17 24"><path :d="chevron" /></svg></a>
          </div>
        </div>
      </div>
    </section>

    <nav class="sub-nav" aria-label="Provincies">
      <ul class="wrap">
        <li v-for="item in provinces" :key="item">
          <a href="#" :class="{ active: item === activeProvince }">{{ item }}</a>
        </li>
      </ul>
    </nav>

    <main class="wrap">
      <h1>Groningen</h1>
      <div class="columns">
        <article>
          <h2>BHV cursus Groningen: praktijklocaties.</h2>
          <p>
            Ook voor een BHV cursus in Groningen profiteert u van eenvoudig bereikbare praktijklocaties. Wilt u de praktijkcursus
            op een andere locatie volgen bekijk dan <a href="#">hier</a> het overzicht van al onze locaties in Nederland.
          </p>
          <p>Bekijk <a href="#">hier</a> onze praktijk- en trainingskalenders.</p>
          <table>
            <colgroup><col class="c-city" /><col class="c-venue" /><col /><col class="c-route" /></colgroup>
            <tbody>
              <tr v-for="row in locations" :key="row.city">
                <th scope="row">{{ row.city }}</th>
                <td>{{ row.venue }}</td>
                <td>{{ row.address }}</td>
                <td><a href="#">Plan Route</a></td>
              </tr>
            </tbody>
          </table>
        </article>
        <aside>
          <a href="#" class="btn">Direct inschrijven<svg width="17" height="24" viewBox="0 0 17 24"><path :d="chevron" /></svg></a>
          <p><strong>Heeft u meer dan 5 kandidaten?</strong><br />Dan profiteert u van nog scherpere tarieven</p>
          <hr />
          <p>Heeft u vragen? Bel ons gerust</p>
        </aside>
      </div>
    </main>
  </div>
</template>

<style>
body {
  margin: 0;
  background: #fff;
}
</style>

<style scoped>
.page {
  font-family: Roboto, "Liberation Sans", sans-serif;
  font-size: 32px;
  line-height: 44px;
  color: #262626;
}
.wrap {
  box-sizing: border-box;
  margin: 0 110px;
}
a {
  color: #e50000;
  text-decoration: none;
}
ul {
  display: flex;
  padding: 0;
  list-style: none;
}

.top {
  display: flex;
  justify-content: space-between;
  align-items: center;
  padding: 50px 0;
}
.logo svg {
  display: block;
  overflow: visible;
}
.logo-word {
  font: 900 28px Lato, sans-serif;
}
.dark {
  fill: #2b2527;
}
.light {
  fill: #fff;
}
.logo-tag {
  font: 16px "Open Sans", sans-serif;
  fill: #444;
  text-anchor: end;
}
.actions {
  display: flex;
  gap: 32px;
}
.btn {
  display: inline-flex;
  align-items: center;
  gap: 20px;
  padding: 13px 20px 17px;
  background: #e50000;
  color: #fff;
  font-size: 28px;
  line-height: 36px;
}
.btn path {
  fill: #fff;
}

.main-nav {
  position: relative;
  z-index: 1;
  background: #000;
  box-shadow: 0 12px 24px rgba(0, 0, 0, 0.18);
}
.main-nav ul {
  gap: 7px;
}
.main-nav a {
  display: block;
  padding: 2px 20px 0;
  color: #fff;
  font-size: 28px;
  line-height: 98px;
}
.main-nav a.active {
  background: #e50000;
}

.hero {
  position: relative;
  display: flex;
  flex-direction: column;
  justify-content: flex-end;
  min-height: 512px;
  overflow: hidden;
  background: #e9ecdf;
}
.map {
  position: absolute;
  inset: 0;
  width: 100%;
  height: 100%;
}
.map path {
  fill: none;
  stroke-linejoin: round;
}
.map .sea path { fill: #b1d0ff; }
.map .sand path { fill: #f8efc6; }
.map .field path { fill: #d2e6ca; }
.map .urban path { fill: #e8e2db; }
.map .park path { fill: #c8dfa8; }
.map .water path { fill: #8fb8ff; }
.map .stream path { stroke: #9dc0fb; stroke-width: 1; }
.map .river path { stroke: #8fb8ff; stroke-width: 4; }
.map .rail path { stroke: #c3c2bd; stroke-width: 1; }
.map .border path { stroke: #a9a9a4; stroke-width: 1; stroke-dasharray: 9 5; }
.map .minor path { stroke: #f8f8f3; stroke-width: 1; }
.map .road path { stroke: #fff; stroke-width: 2; }
.map .major path { stroke: #fff; stroke-width: 3; }
.map .dyke { stroke: #dbe6f0; stroke-width: 1; }
.map text {
  text-anchor: middle;
}
.label {
  fill: #4b4434;
  stroke: #f4f3ec;
  stroke-width: 2px;
  paint-order: stroke;
}
.district {
  fill: #8c7b5b;
  font-style: italic;
  stroke: #f4f3ec;
  stroke-width: 2px;
  paint-order: stroke;
}
.region {
  fill: #a59b8c;
  font-size: 13px;
}
.badge text {
  font-size: 12px;
  font-weight: 700;
  fill: #fff;
}
.badge rect { fill: #de6163; }
.badge-E rect { fill: #63a23d; }
.badge-N rect { fill: #fcd535; stroke: #d3a727; }
.badge-S rect { fill: #fff; stroke: #777; }
.badge-N text,
.badge-S text { fill: #4b4434; }
.badge-S text { font-weight: 400; }
.pin circle { fill: #fff; }
.map .pin path {
  stroke: #c1121f;
  stroke-width: 2px;
}
.hero-bar {
  position: relative;
  background: rgba(0, 0, 0, 0.6);
}
.hero-bar .wrap {
  display: flex;
  justify-content: space-between;
  align-items: center;
  padding: 20px 0;
}
.hero-bar .actions {
  gap: 30px;
}
.hero-bar .btn {
  padding-bottom: 15px;
}
.hero-title {
  margin: 0;
  padding-top: 2px;
  color: #fff;
  font-size: 40px;
}

.sub-nav {
  background: #e50000;
}
.main-nav ul,
.sub-nav ul {
  margin-top: 0;
  margin-bottom: 0;
}
.sub-nav a {
  display: block;
  padding: 0 16px;
  color: #fff;
  font-size: 24px;
  line-height: 80px;
}
.sub-nav a.active {
  background: #ee4d4d;
  font-weight: 700;
}

main {
  padding: 120px 0 60px;
}
h1 {
  margin: 0 20px 96px;
  color: #e50000;
  font-size: 80px;
  font-weight: 500;
  line-height: 96px;
}
.columns {
  display: flex;
  gap: 60px;
}
article {
  flex: 1;
  padding-left: 20px;
}
h2 {
  margin: 0 0 33px;
  font-size: 48px;
  line-height: 56px;
}
article p {
  margin: 0 0 50px;
}
table {
  width: 100%;
  margin-top: -3px;
  border-collapse: collapse;
  table-layout: fixed;
  font-size: 28px;
}
.c-city { width: 25%; }
.c-venue { width: 30%; }
.c-route { width: 213px; }
th,
td {
  padding: 18px 20px;
  border-bottom: 2px solid #ccc;
  text-align: left;
}
aside {
  box-sizing: border-box;
  width: 25%;
  padding: 58px 20px;
  background: #f5f5f5;
  text-align: center;
}
aside p {
  margin: 18px 0 72px;
}
hr {
  margin: 0;
  border: 0;
  border-top: 2px solid #ccc;
}
</style>
